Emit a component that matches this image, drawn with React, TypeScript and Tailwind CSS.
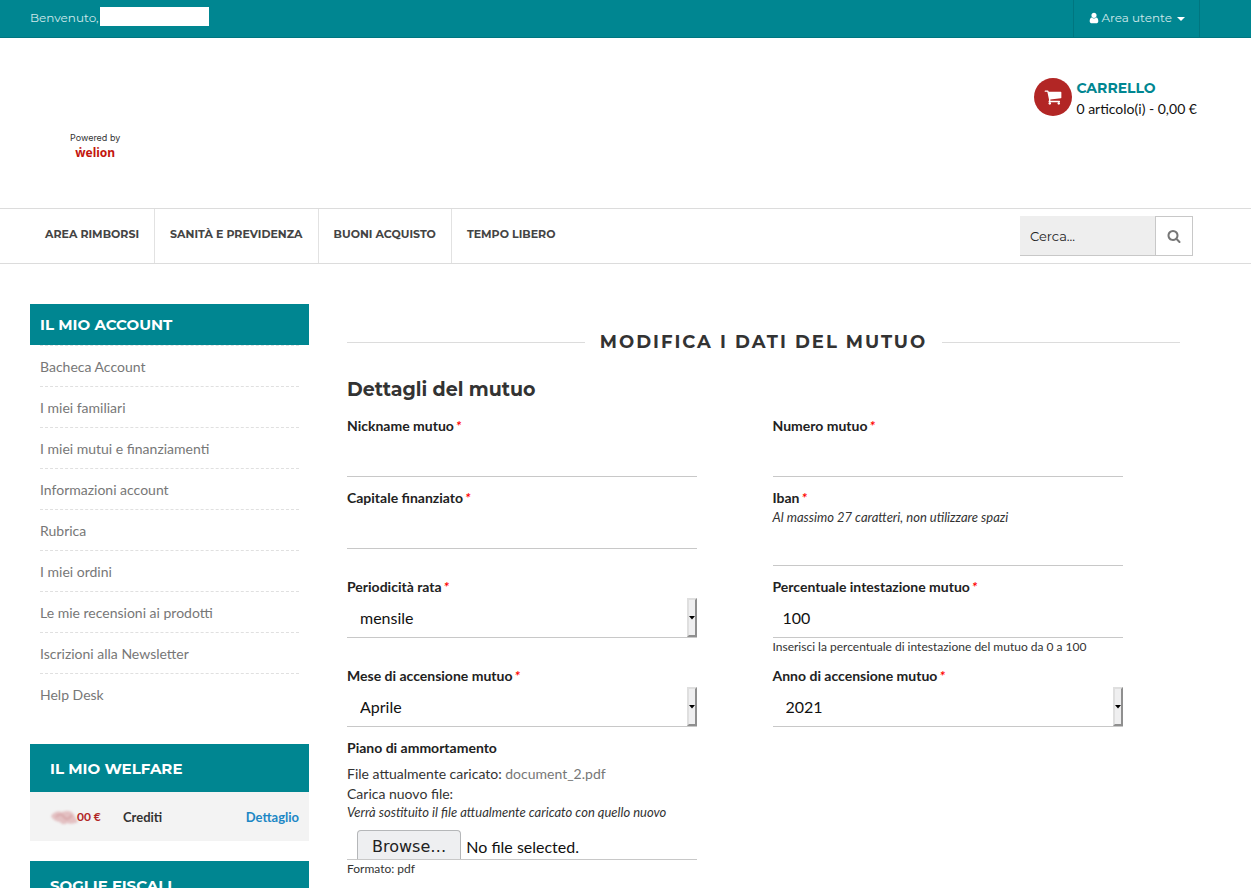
import { useState } from "react";
import type { ReactNode } from "react";

const accountLinks = [
  "Bacheca Account",
  "I miei familiari",
  "I miei mutui e finanziamenti",
  "Informazioni account",
  "Rubrica",
  "I miei ordini",
  "Le mie recensioni ai prodotti",
  "Iscrizioni alla Newsletter",
  "Help Desk",
];

const navLinks = ["Area rimborsi", "Sanità e previdenza", "Buoni acquisto", "Tempo libero"];

const months = [
  "Gennaio",
  "Febbraio",
  "Marzo",
  "Aprile",
  "Maggio",
  "Giugno",
  "Luglio",
  "Agosto",
  "Settembre",
  "Ottobre",
  "Novembre",
  "Dicembre",
];

const heading = "font-['Montserrat','Inter',sans-serif]";

function Glyph({ d, className }: { d: string; className: string }) {
  return (
    <svg viewBox="0 0 1792 1792" fill="currentColor" aria-hidden="true" className={className}>
      <path d={d} />
    </svg>
  );
}

const userPath =
  "M1536 1399q0 109-62.5 187t-150.5 78h-854q-88 0-150.5-78t-62.5-187q0-85 8.5-160.5t31.5-152 58.5-131 94-89 134.5-34.5q131 128 313 128t313-128q76 0 134.5 34.5t94 89 58.5 131 31.5 152 8.5 160.5zm-256-887q0 159-112.5 271.5t-271.5 112.5-271.5-112.5-112.5-271.5 112.5-271.5 271.5-112.5 271.5 112.5 112.5 271.5z";
const cartPath =
  "M704 1536q0 52-38 90t-90 38-90-38-38-90 38-90 90-38 90 38 38 90zm896 0q0 52-38 90t-90 38-90-38-38-90 38-90 90-38 90 38 38 90zm128-1088v512q0 24-16.5 42.5t-40.5 21.5l-1044 122q13 60 13 70 0 16-24 64h920q26 0 45 19t19 45-19 45-45 19h-1024q-26 0-45-19t-19-45q0-11 8-31.5t16-36 21.5-40 15.5-29.5l-177-823h-204q-26 0-45-19t-19-45 19-45 45-19h256q16 0 28.5 6.5t19.5 15.5 13 24.5 8 26 5.5 29.5 4.5 26h1201q26 0 45 19t19 45z";
const searchPath =
  "M1216 832q0-185-131.5-316.5t-316.5-131.5-316.5 131.5-131.5 316.5 131.5 316.5 316.5 131.5 316.5-131.5 131.5-316.5zm512 832q0 52-38 90t-90 38q-54 0-90-38l-343-342q-179 124-399 124-143 0-273.5-55.5t-225-150-150-225-55.5-273.5 55.5-273.5 150-225 225-150 273.5-55.5 273.5 55.5 225 150 150 225 55.5 273.5q0 220-124 399l343 343q37 37 37 90z";

function Field({
  id,
  label,
  required = true,
  before,
  after,
  children,
}: {
  id: string;
  label: string;
  required?: boolean;
  before?: string;
  after?: string;
  children: ReactNode;
}) {
  return (
    <div className="w-full max-w-[350px]">
      <label htmlFor={id} className="mb-px block text-sm leading-5 font-bold text-[#222]">
        {label}
        {required && <em className="ml-0.5 text-[#f00]">*</em>}
      </label>
      {before && <p className="text-[13px] leading-[17px] text-[#333] italic">{before}</p>}
      {children}
      {after && <p className="text-xs leading-[17px] text-[#333]">{after}</p>}
    </div>
  );
}

function TextBox({ id, initial = "" }: { id: string; initial?: string }) {
  const [value, setValue] = useState(initial);
  return (
    <input
      id={id}
      type="text"
      value={value}
      onChange={(e) => setValue(e.target.value)}
      className="block h-10 w-full border-b border-[#c8c8c8] bg-white px-[10px] text-base text-[#111] outline-none focus:border-[#008691]"
    />
  );
}

function SelectBox({ id, options, initial }: { id: string; options: string[]; initial: string }) {
  const [value, setValue] = useState(initial);
  return (
    <div className="relative">
      <select
        id={id}
        value={value}
        onChange={(e) => setValue(e.target.value)}
        className="block h-10 w-full appearance-none border-b border-[#c8c8c8] bg-white px-[13px] text-base text-[#111] outline-none"
      >
        {options.map((option) => (
          <option key={option}>{option}</option>
        ))}
      </select>
      {/* old style drop-down button */}
      <span className="pointer-events-none absolute top-0 right-0 flex h-[39px] w-[10px] items-center justify-center border-2 border-t-[#dfdfdf] border-r-[#8f8f8f] border-b-[#8f8f8f] border-l-[#dfdfdf] bg-[#efeff0]">
        <svg viewBox="0 0 6 4" className="h-1 w-1.5 shrink-0" aria-hidden="true">
          <path d="M0 0h6L3 3.5z" fill="#000" />
        </svg>
      </span>
    </div>
  );
}

function BlockTitle({ children }: { children: ReactNode }) {
  return (
    <h2 className={`${heading} bg-[#008691] px-5 pt-px text-[15px] leading-[47px] font-bold text-white uppercase`}>
      {children}
    </h2>
  );
}

export default function App() {
  const [file, setFile] = useState("");

  return (
    <div className="min-h-screen bg-white font-['Lato',sans-serif] text-sm leading-5 text-[#333]">
      <div className="border-b border-[#007680] bg-[#008691]">
        <div className={`${heading} flex h-[37px] items-stretch justify-between pr-[51px] pl-[30px] text-xs text-[#cfe8ea]`}>
          <div className="flex items-center gap-px pb-0.5">
            <span>Benvenuto,</span>
            <span className="mb-0.5 h-[19px] w-[109px] bg-white" />
          </div>
          <button
            type="button"
            className="flex items-center gap-px border-x border-[#007680] px-[14px] pb-0.5"
          >
            <Glyph d={userPath} className="h-3 w-3 text-white" />
            <span>Area utente</span>
            <svg viewBox="0 0 8 4" className="mt-0.5 ml-1 h-1 w-2 text-white" aria-hidden="true">
              <path d="M0 0h8L4 4z" fill="currentColor" />
            </svg>
          </button>
        </div>
      </div>

      <header className="flex h-[170px] items-start justify-between pr-[54px] pl-[30px]">
        <a href="#" className="mt-[92px] ml-10 block text-center">
          <span className="block font-['Inter',sans-serif] text-[9px] leading-4 text-[#333]">Powered by</span>
          <span className="block font-['Noto_Sans',sans-serif] text-xs leading-[14px] font-bold text-[#c3150d]">
            ẇelion
          </span>
        </a>
        <a href="#" className="mt-10 flex items-start gap-1">
          <span className="flex h-[38px] w-[38px] items-center justify-center rounded-full bg-[#b22625] text-white">
            <Glyph d={cartPath} className="h-[18px] w-[18px]" />
          </span>
          <span className="block">
            <span className={`${heading} block text-sm leading-5 font-bold text-[#008691]`}>CARRELLO</span>
            <span className="block text-sm leading-[22px] text-[#111]">0 articolo(i) - 0,00 €</span>
          </span>
        </a>
      </header>

      <nav className="flex h-14 items-stretch justify-between border-y border-[#dcdcdc] pr-[58px] pl-[30px]">
        <ul className="flex">
          {navLinks.map((link) => (
            <li key={link} className="border-r border-[#e2e2e2] last:border-r-0">
              <a
                href="#"
                className={`${heading} block px-[15px] text-[11px] leading-[50px] font-bold text-[#444] uppercase`}
              >
                {link}
              </a>
            </li>
          ))}
        </ul>
        <form className="mt-[7px] flex h-10" onSubmit={(e) => e.preventDefault()}>
          <input
            type="text"
            aria-label="Cerca"
            placeholder="Cerca..."
            className={`${heading} w-[135px] border-b border-[#c8c8c8] bg-[#eee] px-[10px] text-[13px] text-[#222] outline-none placeholder:text-[#222]`}
          />
          <button
            type="submit"
            aria-label="Cerca"
            className="flex w-[38px] items-center justify-center border border-[#c8c8c8] bg-white text-[#777]"
          >
            <Glyph d={searchPath} className="h-[14px] w-[14px]" />
          </button>
        </form>
      </nav>

      <div className="flex items-start gap-[38px] pt-10 pr-[71px] pl-[30px]">
        <aside className="w-[279px] shrink-0">
          <h2 className={`${heading} bg-[#008691] px-[10px] text-[15px] leading-[41px] font-bold text-white uppercase`}>
            Il mio account
          </h2>
          <ul className="px-[10px]">
            {accountLinks.map((link) => (
              <li key={link} className="border-t border-dashed border-[#e0e0e0]">
                <a href="#" className="block pt-[11px] pb-[9px] leading-5 text-[#777] hover:text-[#008691]">
                  {link}
                </a>
              </li>
            ))}
          </ul>

          <section className="mt-[30px]">
            <BlockTitle>Il mio welfare</BlockTitle>
            <div className="flex h-[49px] items-center bg-[#f3f3f3] pr-[10px] pl-5 text-[13px] font-bold">
              <span className="flex w-[73px] items-center text-xs text-[#b22625]">
                <svg viewBox="0 0 27 16" className="h-4 w-[27px] overflow-visible" aria-hidden="true">
                  <g className="blur-[1px]">
                    <path d="M1 7Q5 1 12 3q9-3 12 3l4 7q-6 3-11 1-4 3-7-1-7-1-9-6z" fill="#e3c0c2" />
                    <path d="M6 8q5-5 8 0t8-2" fill="none" stroke="#d5a2a5" strokeWidth="1.5" />
                  </g>
                </svg>
                00 €
              </span>
              <span>Crediti</span>
              <a href="#" className="ml-auto text-[#1c87c5]">
                Dettaglio
              </a>
            </div>
          </section>

          <section className="mt-5">
            <BlockTitle>Soglie fiscali</BlockTitle>
          </section>
        </aside>

        <main className="min-w-0 flex-1 pt-6">
          <h1
            className={`${heading} flex items-center gap-[15px] text-lg leading-7 font-bold tracking-[2px] text-[#333] uppercase before:h-px before:flex-1 before:bg-[#dcdcdc] after:h-px after:flex-1 after:bg-[#dcdcdc]`}
          >
            Modifica i dati del mutuo
          </h1>
          <h2 className={`${heading} mt-5 text-[19px] leading-7 font-bold text-[#333]`}>Dettagli del mutuo</h2>

          <form
            className="mt-3 grid grid-cols-2 gap-x-[18px] gap-y-[11px]"
            onSubmit={(e) => e.preventDefault()}
          >
            <Field id="nickname" label="Nickname mutuo">
              <TextBox id="nickname" />
            </Field>
            <Field id="numero" label="Numero mutuo">
              <TextBox id="numero" />
            </Field>
            <Field id="capitale" label="Capitale finanziato">
              <TextBox id="capitale" />
            </Field>
            <Field id="iban" label="Iban" before="Al massimo 27 caratteri, non utilizzare spazi">
              <TextBox id="iban" />
            </Field>
            <Field id="periodicita" label="Periodicità rata">
              <SelectBox
                id="periodicita"
                options={["mensile", "trimestrale", "semestrale", "annuale"]}
                initial="mensile"
              />
            </Field>
            <Field
              id="percentuale"
              label="Percentuale intestazione mutuo"
              after="Inserisci la percentuale di intestazione del mutuo da 0 a 100"
            >
              <TextBox id="percentuale" initial="100" />
            </Field>
            <Field id="mese" label="Mese di accensione mutuo">
              <SelectBox id="mese" options={months} initial="Aprile" />
            </Field>
            <Field id="anno" label="Anno di accensione mutuo">
              <SelectBox id="anno" options={["2021", "2020", "2019", "2018"]} initial="2021" />
            </Field>
            <Field id="piano" label="Piano di ammortamento" required={false} after="Formato: pdf">
              <p className="mt-1.5">
                File attualmente caricato:{" "}
                <a href="#" className="text-[#777]">
                  document_2.pdf
                </a>
              </p>
              <p>Carica nuovo file:</p>
              <p className="text-[13px] leading-[17px] italic">
                Verrà sostituito il file attualmente caricato con quello nuovo
              </p>
              <div className="relative flex h-[39px] items-end overflow-hidden border-b border-[#c8c8c8] px-[10px] text-base text-[#111]">
                <input
                  id="piano"
                  type="file"
                  accept="application/pdf"
                  onChange={(e) => setFile(e.target.files?.[0]?.name ?? "")}
                  className="sr-only"
                />
                <label
                  htmlFor="piano"
                  className="h-[29px] rounded-t-sm border border-b-0 border-[#b5b7b9] bg-[#eeeff1] px-[14px] pt-1 font-['DejaVu_Sans',sans-serif] leading-6 text-[#222]"
                >
                  Browse…
                </label>
                <span className="ml-[5px] leading-6">{file || "No file selected."}</span>
              </div>
            </Field>
          </form>
        </main>
      </div>
    </div>
  );
}
